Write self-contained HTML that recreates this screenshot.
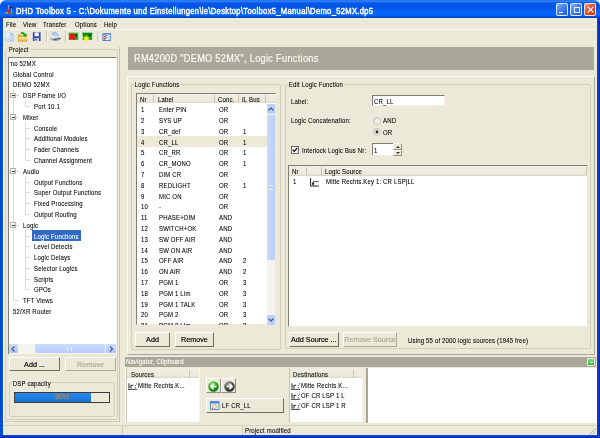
<!DOCTYPE html><html><head><meta charset="utf-8"><style>
*{margin:0;padding:0;box-sizing:border-box}
html,body{width:600px;height:438px;overflow:hidden;background:#ECE9D8}
html{background:#0846C8}
body{filter:blur(0.35px)}
body{position:relative;font-family:"Liberation Sans",sans-serif;font-size:7.2px;color:#000}
.a{position:absolute}
.t{position:absolute;white-space:nowrap;line-height:11.2px;letter-spacing:0.2px;-webkit-text-stroke:0.08px currentColor;transform:scaleX(0.836);transform-origin:0 0}
.w{background:#fff}
.grp{position:absolute;border:1px solid #D0D0BF;border-radius:2px}
.gl{position:absolute;background:#ECE9D8;padding:0 1px;line-height:8px;white-space:nowrap;letter-spacing:0.2px;-webkit-text-stroke:0.08px currentColor;transform:translateY(1.0px) scaleX(0.836);transform-origin:0 0}
.btn{position:absolute;border:1px solid #003C74;border-radius:2px;background:linear-gradient(#FFFFFF,#F3F3EF 60%,#E2E1D8);text-align:center;white-space:nowrap;-webkit-text-stroke:0.18px currentColor}
.hdr{position:absolute;background:linear-gradient(#EFEEE3,#EBEADB 80%,#D8D5C4)}
.sep{position:absolute;width:1px;background:#C7C5B2}
.tl{position:absolute;background:#DDDBD1}
</style></head><body>
<div class="a" style="left:0;top:0;width:600px;height:8px;background:#F4F4F4"></div>
<div class="a" style="left:0;top:0;width:600px;height:18px;background:linear-gradient(#1F5FD8 0%,#3A8EFF 6%,#0C60F2 14%,#0452E2 28%,#0456EA 45%,#0866FC 68%,#0462F8 86%,#0048D4 94%,#003CC0 100%);border-radius:6px 6px 0 0"></div>
<div class="a" style="left:0;top:17px;width:3px;height:421px;background:linear-gradient(90deg,#0040C8,#0058E8 60%,#0045C8)"></div>
<div class="a" style="left:596.5px;top:17px;width:3.5px;height:421px;background:linear-gradient(90deg,#0846D8,#0A3CC8 50%,#0020A0)"></div>
<svg class="a" style="left:3px;top:4px" width="12" height="11"><path d="M5.6 1V5" stroke="#A8C8F0" stroke-width="0.8"/><rect x="4.8" y="5" width="1.9" height="5" fill="#F01818"/><path d="M1 9.5L3.5 8.5H10.5V10H1Z" fill="#8A6A3A"/><rect x="7.2" y="3" width="2.8" height="1.3" fill="#3A2A1A"/><path d="M8.5 4.3V9" stroke="#90B8E8" stroke-width="0.8"/><path d="M1.5 9L3.5 8.3H4.8V9.5" fill="#C8C0A0"/></svg>
<div class="t" style="left:16px;top:5.5px;font-weight:normal;font-size:8.5px;letter-spacing:0.35px;color:#fff;line-height:10px;transform:scaleX(0.895);-webkit-text-stroke:0.45px #fff">DHD Toolbox 5 - C:\Dokumente und Einstellungen\le\Desktop\Toolbox5_Manual\Demo_52MX.dp5</div>
<div class="a" style="left:556.3px;top:3.4px;width:11.6px;height:12.4px;border:0.9px solid rgba(255,255,255,0.8);border-radius:2px;background:linear-gradient(135deg,#8AB4FC,#4A88F4 40%,#2E6AE8 75%,#2458D8)"><div class="a" style="left:2.2px;top:7.6px;width:3.6px;height:1.3px;background:#fff"></div></div>
<div class="a" style="left:570px;top:3.4px;width:12px;height:12.4px;border:0.9px solid rgba(255,255,255,0.8);border-radius:2px;background:linear-gradient(135deg,#8AB4FC,#4A88F4 40%,#2E6AE8 75%,#2458D8)"><div class="a" style="left:2.5px;top:2.2px;width:6px;height:6px;border:0.9px solid #E8F0FF;border-top-width:1.6px"></div></div>
<div class="a" style="left:583.8px;top:3.4px;width:12px;height:12.4px;border:0.9px solid rgba(255,255,255,0.8);border-radius:2px;background:linear-gradient(135deg,#F4A888,#E0603A 35%,#D44A20 70%,#C03A18)"><svg class="a" style="left:0;top:0" width="11" height="11"><path d="M2.8 2.8L8.4 8.4M8.4 2.8L2.8 8.4" stroke="#fff" stroke-width="1.2"/></svg></div>
<div class="t" style="left:6px;top:19.8px;line-height:10px">File</div>
<div class="t" style="left:22.5px;top:19.8px;line-height:10px">View</div>
<div class="t" style="left:43px;top:19.8px;line-height:10px">Transfer</div>
<div class="t" style="left:75px;top:19.8px;line-height:10px">Options</div>
<div class="t" style="left:103.8px;top:19.8px;line-height:10px">Help</div>
<div class="a" style="left:3px;top:29px;width:593px;height:1px;background:#F8F7F0"></div>
<svg class="a" style="left:0;top:28px" width="120" height="16" viewBox="0 28 120 16">
<defs>
<linearGradient id="gdoc" x1="0" y1="0" x2="1" y2="1"><stop offset="0" stop-color="#FFFFFF"/><stop offset="1" stop-color="#A9C6EE"/></linearGradient>
<linearGradient id="gfold" x1="0" y1="0" x2="0" y2="1"><stop offset="0" stop-color="#FFF0A8"/><stop offset="1" stop-color="#E0A830"/></linearGradient>
<linearGradient id="gprn" x1="0" y1="0" x2="0" y2="1"><stop offset="0" stop-color="#F0F0F4"/><stop offset="1" stop-color="#8890A0"/></linearGradient>
</defs>
<path d="M5.5 32.2H10.6L13.6 35.2V41.4H5.5Z" fill="url(#gdoc)" stroke="#B5C9E8" stroke-width="0.6"/>
<path d="M10.6 32.2V35.2H13.6Z" fill="#8FB0E0"/>
<path d="M18.2 34.8H21.2L22.2 35.8H26.8V41.3H18.2Z" fill="#E8B838" stroke="#C89028" stroke-width="0.5"/>
<path d="M19 37H28.2L27 41.3H18.2Z" fill="url(#gfold)"/>
<path d="M21 33.2Q23.2 32.2 24.8 34.6" stroke="#1EAA1E" stroke-width="1.9" fill="none"/>
<path d="M22.6 34.2L27.4 34L25.3 37.6Z" fill="#1EAA1E"/>
<path d="M32.8 32.3H40.6V41H32.8Z" fill="#3A4AB8"/>
<path d="M34.6 32.5H38.8V36.2H34.6Z" fill="#F4F4FC"/>
<path d="M34.4 38H39V41H34.4Z" fill="#C8CCEC"/>
<path d="M35.2 38.6H36.6V40.6H35.2Z" fill="#3A4AB8"/>
<rect x="46" y="31" width="1" height="11" fill="#C9C6B6"/><rect x="47" y="31" width="0.8" height="11" fill="#F8F7F0"/>
<path d="M52 33.5L55.5 31.8L58.8 35.6L55.2 37.4Z" fill="#A8D0F8" stroke="#6A9AD8" stroke-width="0.5"/>
<path d="M50 37.6L54.5 35.8L60.8 36.6V39.4L56 41.2L50.4 40Z" fill="url(#gprn)"/>
<path d="M53.5 39.6L60.5 38.4" stroke="#404858" stroke-width="1"/>
<path d="M51.5 37.6L56.5 36.5" stroke="#F8F8FC" stroke-width="0.6"/>
<rect x="65" y="31" width="1" height="11" fill="#C9C6B6"/><rect x="66" y="31" width="0.8" height="11" fill="#F8F7F0"/>
<rect x="68.8" y="32.5" width="9.5" height="7.3" fill="#189A28"/>
<rect x="68.8" y="32.5" width="9.5" height="1.8" fill="#30C030"/>
<path d="M68.8 32.5H78.3V39.8" stroke="#E8F8E0" stroke-width="0.5" fill="none"/>
<circle cx="75.8" cy="35.2" r="1" fill="#101020"/>
<path d="M69 34.2L71.5 33.6L73.2 33.8L75 34.8L74.6 37.2L75.4 39.8H72.8L71.8 38.6L70.4 39.8L69 39.2L69.6 37Z" fill="#FF1010"/>
<rect x="82.7" y="32.5" width="9.6" height="7.3" fill="#189A28"/>
<rect x="82.7" y="32.5" width="9.6" height="2.5" fill="#0C8A18"/>
<path d="M82.7 32.5H92.3V39.8" stroke="#E8F8E0" stroke-width="0.5" fill="none"/>
<circle cx="90" cy="35.2" r="1" fill="#101020"/>
<path d="M83 37.2L85.4 37L86.6 35.6L87.8 37.2L89.3 37.6L88.4 39.2L88.8 41.2L86.6 40.6L84.2 41.2L84.6 39.4Z" fill="#F8F010"/>
<rect x="97.2" y="31" width="1" height="11" fill="#C9C6B6"/><rect x="98.2" y="31" width="0.8" height="11" fill="#F8F7F0"/>
<rect x="102.5" y="33.3" width="8.5" height="7.6" rx="0.8" fill="#2A6AD8"/>
<rect x="103.3" y="34.6" width="6.9" height="5.5" fill="#F4F8FF"/>
<rect x="106.5" y="34.6" width="3.7" height="5.5" fill="#C8E4FA"/>
<path d="M103.6 35.8L104.6 36.8L106.6 34.8M103.6 38.2L104.6 39.2L106.6 37.2" stroke="#B04A30" stroke-width="1.1" fill="none"/>
</svg>
<div class="a" style="left:3px;top:47px;width:117px;height:375px;border-left:1px solid #fff;border-right:1px solid #C8C5B5;border-bottom:1px solid #D0CDBD"></div>
<div class="grp" style="left:4.8px;top:49px;width:113.5px;height:371px"></div>
<div class="gl" style="left:8px;top:44.9px">Project</div>
<div class="a w" style="left:7.5px;top:56.5px;width:109px;height:297px;border:1px solid #7F7F73;border-right-color:#F4F3EC;border-bottom-color:#F4F3EC;border-top-color:#858378;border-top-width:1.5px"></div>
<div class="tl" style="left:12.5px;top:90.27px;width:1px;height:210.01px"></div>
<div class="tl" style="left:24.5px;top:100.27px;width:1px;height:5.79px"></div>
<div class="tl" style="left:24.5px;top:121.85px;width:1px;height:38.16px"></div>
<div class="tl" style="left:24.5px;top:175.80px;width:1px;height:38.16px"></div>
<div class="tl" style="left:24.5px;top:229.75px;width:1px;height:59.74px"></div>
<div class="a" style="left:8.5px;top:57.90px;width:100px;height:11px;overflow:hidden"><div class="t" style="left:0.50px;top:0">mo 52MX</div></div>
<div class="t" style="left:12.5px;top:68.69px">Global Control</div>
<div class="t" style="left:12.5px;top:79.48px">DEMO 52MX</div>
<div class="tl" style="left:15px;top:95.27px;width:4px;height:1px"></div>
<div class="a" style="left:10.1px;top:92.57px;width:5.6px;height:5.6px;border:0.7px solid #B4B4A6;background:linear-gradient(135deg,#fff,#E4E2D8)"><div class="a" style="left:1.1px;top:1.8px;width:2.6px;height:0.8px;background:#444"></div></div>
<div class="t" style="left:23.2px;top:90.27px">DSP Frame I/O</div>
<div class="tl" style="left:25px;top:106.06px;width:5px;height:1px"></div>
<div class="t" style="left:34px;top:101.06px">Port 10.1</div>
<div class="tl" style="left:15px;top:116.85px;width:4px;height:1px"></div>
<div class="a" style="left:10.1px;top:114.15px;width:5.6px;height:5.6px;border:0.7px solid #B4B4A6;background:linear-gradient(135deg,#fff,#E4E2D8)"><div class="a" style="left:1.1px;top:1.8px;width:2.6px;height:0.8px;background:#444"></div></div>
<div class="t" style="left:23.2px;top:111.85px">Mixer</div>
<div class="tl" style="left:25px;top:127.64px;width:5px;height:1px"></div>
<div class="t" style="left:34px;top:122.64px">Console</div>
<div class="tl" style="left:25px;top:138.43px;width:5px;height:1px"></div>
<div class="t" style="left:34px;top:133.43px">Additional Modules</div>
<div class="tl" style="left:25px;top:149.22px;width:5px;height:1px"></div>
<div class="t" style="left:34px;top:144.22px">Fader Channels</div>
<div class="tl" style="left:25px;top:160.01px;width:5px;height:1px"></div>
<div class="t" style="left:34px;top:155.01px">Channel Assignment</div>
<div class="tl" style="left:15px;top:170.80px;width:4px;height:1px"></div>
<div class="a" style="left:10.1px;top:168.10px;width:5.6px;height:5.6px;border:0.7px solid #B4B4A6;background:linear-gradient(135deg,#fff,#E4E2D8)"><div class="a" style="left:1.1px;top:1.8px;width:2.6px;height:0.8px;background:#444"></div></div>
<div class="t" style="left:23.2px;top:165.80px">Audio</div>
<div class="tl" style="left:25px;top:181.59px;width:5px;height:1px"></div>
<div class="t" style="left:34px;top:176.59px">Output Functions</div>
<div class="tl" style="left:25px;top:192.38px;width:5px;height:1px"></div>
<div class="t" style="left:34px;top:187.38px">Super Output Functions</div>
<div class="tl" style="left:25px;top:203.17px;width:5px;height:1px"></div>
<div class="t" style="left:34px;top:198.17px">Fixed Processing</div>
<div class="tl" style="left:25px;top:213.96px;width:5px;height:1px"></div>
<div class="t" style="left:34px;top:208.96px">Output Routing</div>
<div class="tl" style="left:15px;top:224.75px;width:4px;height:1px"></div>
<div class="a" style="left:10.1px;top:222.05px;width:5.6px;height:5.6px;border:0.7px solid #B4B4A6;background:linear-gradient(135deg,#fff,#E4E2D8)"><div class="a" style="left:1.1px;top:1.8px;width:2.6px;height:0.8px;background:#444"></div></div>
<div class="t" style="left:23.2px;top:219.75px">Logic</div>
<div class="tl" style="left:25px;top:235.54px;width:5px;height:1px"></div>
<div class="a" style="left:32px;top:230.24px;width:48.5px;height:10.7px;background:#316AC5"></div>
<div class="t" style="left:34px;top:230.54px;color:#fff">Logic Functions</div>
<div class="tl" style="left:25px;top:246.33px;width:5px;height:1px"></div>
<div class="t" style="left:34px;top:241.33px">Level Detects</div>
<div class="tl" style="left:25px;top:257.12px;width:5px;height:1px"></div>
<div class="t" style="left:34px;top:252.12px">Logic Delays</div>
<div class="tl" style="left:25px;top:267.91px;width:5px;height:1px"></div>
<div class="t" style="left:34px;top:262.91px">Selector Logics</div>
<div class="tl" style="left:25px;top:278.70px;width:5px;height:1px"></div>
<div class="t" style="left:34px;top:273.70px">Scripts</div>
<div class="tl" style="left:25px;top:289.49px;width:5px;height:1px"></div>
<div class="t" style="left:34px;top:284.49px">GPOs</div>
<div class="tl" style="left:13px;top:300.28px;width:6px;height:1px"></div>
<div class="t" style="left:23.2px;top:295.28px">TFT Views</div>
<div class="t" style="left:12.5px;top:306.07px">52/XR Router</div>
<div class="a" style="left:7.5px;top:56.5px;width:1px;height:297px;background:#7F7F73"></div><div class="a" style="left:8.5px;top:58px;width:0.8px;height:295px;background:#fff"></div>
<div class="a" style="left:8.5px;top:343.6px;width:108px;height:9.2px;background:#F4F3EE"></div>
<div class="a" style="left:9px;top:344px;width:9px;height:8.5px;background:linear-gradient(#C8DAFC,#B0C8F8);border-radius:1px"><svg class="a" style="left:2px;top:1.5px" width="5" height="6"><path d="M3.5 0.5L1 3L3.5 5.5" stroke="#4D6185" stroke-width="1.3" fill="none"/></svg></div>
<div class="a" style="left:34.5px;top:344px;width:70px;height:8.5px;background:linear-gradient(#CADCFC,#B8CEFA);border-radius:1px"><div class="a" style="left:32px;top:2.5px;width:5px;height:4px;border-left:1px solid #EEF4FE;border-right:1px solid #EEF4FE"></div></div>
<div class="a" style="left:105.5px;top:344px;width:10.5px;height:8.5px;background:linear-gradient(#C8DAFC,#B0C8F8);border-radius:1px"><svg class="a" style="left:3px;top:1.5px" width="5" height="6"><path d="M1 0.5L3.5 3L1 5.5" stroke="#4D6185" stroke-width="1.3" fill="none"/></svg></div>
<div class="btn" style="left:8.6px;top:356.6px;width:51.8px;height:14.8px;line-height:13px;border-color:#ACA899;background:#ECE9D8;border-right-color:#716F64;border-bottom-color:#716F64;border-top-color:#fff;border-left-color:#fff;border-radius:0">Add ...</div>
<div class="btn" style="left:64.6px;top:356.6px;width:51.8px;height:14.8px;line-height:13px;color:#ACA899;background:#ECE9D8;border-right-color:#ACA899;border-bottom-color:#ACA899;border-top-color:#fff;border-left-color:#fff;border-radius:0">Remove</div>
<div class="grp" style="left:8.6px;top:382.3px;width:106px;height:34.5px"></div>
<div class="gl" style="left:12px;top:379px">DSP capacity</div>
<div class="a" style="left:14.4px;top:392px;width:95.4px;height:10.6px;border:1px solid #3A3A3A;background:#ECE9D8"><div class="a" style="left:0;top:0;width:75.8px;height:8.6px;background:linear-gradient(#2A86E6,#1E7EE0 50%,#1A74D4)"></div><div class="t" style="left:0;top:-0.8px;width:93.4px;text-align:center;color:#C8864A;line-height:10px;transform:none;letter-spacing:-0.2px">80%</div></div>
<div class="a" style="left:128px;top:47px;width:466px;height:23px;background:#ACA899"></div>
<div class="t" style="left:133.5px;top:52.9px;font-size:10.2px;letter-spacing:0.35px;color:#FAFAF6;line-height:11px;transform:scaleX(0.898);-webkit-text-stroke:0.15px #fff">RM4200D "DEMO 52MX", Logic Functions</div>
<div class="a" style="left:126.5px;top:76px;width:468px;height:278.5px;border-top:1px solid #FAF9F4;border-left:1px solid #FAF9F4;border-bottom:1px solid #ACA899;border-right:1px solid #ACA899"></div>
<div class="grp" style="left:131px;top:83.7px;width:149.5px;height:266px"></div>
<div class="gl" style="left:134.2px;top:80px">Logic Functions</div>
<div class="a w" style="left:135.7px;top:92.8px;width:140.5px;height:232px;border:1px solid #7F7F73;border-right-color:#ECEADF;border-bottom-color:#ECEADF"></div>
<div class="hdr" style="left:136.7px;top:93.8px;width:139px;height:9.5px"></div>
<div class="sep" style="left:153px;top:95px;height:7px"></div>
<div class="sep" style="left:213.8px;top:95px;height:7px"></div>
<div class="sep" style="left:238px;top:95px;height:7px"></div>
<div class="sep" style="left:265.3px;top:95px;height:7px"></div>
<div class="t" style="left:139.7px;top:94.3px">Nr</div>
<div class="t" style="left:157.5px;top:94.3px">Label</div>
<div class="t" style="left:217.8px;top:94.3px">Conc.</div>
<div class="t" style="left:241.8px;top:94.3px">IL Bus</div>
<div class="a" style="left:0;top:0;width:600px;height:324.8px;overflow:hidden"><div class="a" style="left:0;top:0;width:600px;height:438px;clip-path:inset(103.3px 0 0 0)"><div class="t" style="left:141.3px;top:104.30px">1</div><div class="t" style="left:159px;top:104.30px">Enter PIN</div><div class="t" style="left:218.8px;top:104.30px">OR</div><div class="t" style="left:242.8px;top:104.30px"></div><div class="t" style="left:141.3px;top:115.09px">2</div><div class="t" style="left:159px;top:115.09px">SYS UP</div><div class="t" style="left:218.8px;top:115.09px">OR</div><div class="t" style="left:242.8px;top:115.09px"></div><div class="t" style="left:141.3px;top:125.88px">3</div><div class="t" style="left:159px;top:125.88px">CR_def</div><div class="t" style="left:218.8px;top:125.88px">OR</div><div class="t" style="left:242.8px;top:125.88px">1</div><div class="a" style="left:137px;top:136.27px;width:130px;height:10.4px;background:#ECE9D8"></div><div class="t" style="left:141.3px;top:136.67px">4</div><div class="t" style="left:159px;top:136.67px">CR_LL</div><div class="t" style="left:218.8px;top:136.67px">OR</div><div class="t" style="left:242.8px;top:136.67px">1</div><div class="t" style="left:141.3px;top:147.46px">5</div><div class="t" style="left:159px;top:147.46px">CR_RR</div><div class="t" style="left:218.8px;top:147.46px">OR</div><div class="t" style="left:242.8px;top:147.46px">1</div><div class="t" style="left:141.3px;top:158.25px">6</div><div class="t" style="left:159px;top:158.25px">CR_MONO</div><div class="t" style="left:218.8px;top:158.25px">OR</div><div class="t" style="left:242.8px;top:158.25px">1</div><div class="t" style="left:141.3px;top:169.04px">7</div><div class="t" style="left:159px;top:169.04px">DIM CR</div><div class="t" style="left:218.8px;top:169.04px">OR</div><div class="t" style="left:242.8px;top:169.04px"></div><div class="t" style="left:141.3px;top:179.83px">8</div><div class="t" style="left:159px;top:179.83px">REDLIGHT</div><div class="t" style="left:218.8px;top:179.83px">OR</div><div class="t" style="left:242.8px;top:179.83px">1</div><div class="t" style="left:141.3px;top:190.62px">9</div><div class="t" style="left:159px;top:190.62px">MIC ON</div><div class="t" style="left:218.8px;top:190.62px">OR</div><div class="t" style="left:242.8px;top:190.62px"></div><div class="t" style="left:141.3px;top:201.41px">10</div><div class="t" style="left:159px;top:201.41px">-</div><div class="t" style="left:218.8px;top:201.41px">OR</div><div class="t" style="left:242.8px;top:201.41px"></div><div class="t" style="left:141.3px;top:212.20px">11</div><div class="t" style="left:159px;top:212.20px">PHASE+DIM</div><div class="t" style="left:218.8px;top:212.20px">AND</div><div class="t" style="left:242.8px;top:212.20px"></div><div class="t" style="left:141.3px;top:222.99px">12</div><div class="t" style="left:159px;top:222.99px">SWITCH+OK</div><div class="t" style="left:218.8px;top:222.99px">AND</div><div class="t" style="left:242.8px;top:222.99px"></div><div class="t" style="left:141.3px;top:233.78px">13</div><div class="t" style="left:159px;top:233.78px">SW OFF AIR</div><div class="t" style="left:218.8px;top:233.78px">AND</div><div class="t" style="left:242.8px;top:233.78px"></div><div class="t" style="left:141.3px;top:244.57px">14</div><div class="t" style="left:159px;top:244.57px">SW ON AIR</div><div class="t" style="left:218.8px;top:244.57px">AND</div><div class="t" style="left:242.8px;top:244.57px"></div><div class="t" style="left:141.3px;top:255.36px">15</div><div class="t" style="left:159px;top:255.36px">OFF AIR</div><div class="t" style="left:218.8px;top:255.36px">AND</div><div class="t" style="left:242.8px;top:255.36px">2</div><div class="t" style="left:141.3px;top:266.15px">16</div><div class="t" style="left:159px;top:266.15px">ON AIR</div><div class="t" style="left:218.8px;top:266.15px">AND</div><div class="t" style="left:242.8px;top:266.15px">2</div><div class="t" style="left:141.3px;top:276.94px">17</div><div class="t" style="left:159px;top:276.94px">PGM 1</div><div class="t" style="left:218.8px;top:276.94px">OR</div><div class="t" style="left:242.8px;top:276.94px">3</div><div class="t" style="left:141.3px;top:287.73px">18</div><div class="t" style="left:159px;top:287.73px">PGM 1 Lim</div><div class="t" style="left:218.8px;top:287.73px">OR</div><div class="t" style="left:242.8px;top:287.73px">3</div><div class="t" style="left:141.3px;top:298.52px">19</div><div class="t" style="left:159px;top:298.52px">PGM 1 TALK</div><div class="t" style="left:218.8px;top:298.52px">OR</div><div class="t" style="left:242.8px;top:298.52px">3</div><div class="t" style="left:141.3px;top:309.31px">20</div><div class="t" style="left:159px;top:309.31px">PGM 2</div><div class="t" style="left:218.8px;top:309.31px">OR</div><div class="t" style="left:242.8px;top:309.31px">3</div><div class="t" style="left:141.3px;top:320.10px">21</div><div class="t" style="left:159px;top:320.10px">PGM 2 Lim</div><div class="t" style="left:218.8px;top:320.10px">OR</div><div class="t" style="left:242.8px;top:320.10px">3</div></div></div>
<div class="a" style="left:266.8px;top:103.5px;width:8.5px;height:221.5px;background:#F4F3EE"></div>
<div class="a" style="left:266.8px;top:103.5px;width:8.5px;height:10px;background:linear-gradient(90deg,#C4D8FC,#B4CCF8);border-radius:1px"><svg class="a" style="left:1.5px;top:3px" width="6" height="4"><path d="M0.5 3.5L3 1L5.5 3.5" stroke="#4D6185" stroke-width="1.3" fill="none"/></svg></div>
<div class="a" style="left:266.8px;top:114.5px;width:8.5px;height:145.5px;background:linear-gradient(90deg,#C8DAFC,#B8CEFA);border-radius:1px"><div class="a" style="left:2.5px;top:70px;width:4px;height:5px;border-top:1px solid #EEF4FE;border-bottom:1px solid #EEF4FE"></div></div>
<div class="a" style="left:266.8px;top:315px;width:8.5px;height:10px;background:linear-gradient(90deg,#C4D8FC,#B4CCF8);border-radius:1px"><svg class="a" style="left:1.5px;top:3px" width="6" height="4"><path d="M0.5 0.5L3 3L5.5 0.5" stroke="#4D6185" stroke-width="1.3" fill="none"/></svg></div>
<div class="btn" style="left:135px;top:332.4px;width:35px;height:14.5px;line-height:13px;background:#ECE9D8;border-color:#fff #716F64 #716F64 #fff;border-radius:0">Add</div>
<div class="btn" style="left:175px;top:332.4px;width:38.8px;height:14.5px;line-height:13px;background:#ECE9D8;border-color:#fff #716F64 #716F64 #fff;border-radius:0">Remove</div>
<div class="grp" style="left:285.3px;top:83.7px;width:306px;height:265.5px"></div>
<div class="gl" style="left:288.3px;top:80px">Edit Logic Function</div>
<div class="t" style="left:291px;top:96px">Label:</div>
<div class="a w" style="left:372.3px;top:95.3px;width:72.5px;height:10.8px;border:1px solid #7F7F73;border-right-color:#F0EFE8;border-bottom-color:#F0EFE8"></div>
<div class="t" style="left:374px;top:96px">CR_LL</div>
<div class="t" style="left:291px;top:115.1px">Logic Concatenation:</div>
<svg class="a" style="left:373px;top:116.6px" width="8" height="8"><defs><linearGradient id="rg" x1="0" y1="0" x2="1" y2="1"><stop offset="0" stop-color="#DCDCD4"/><stop offset="1" stop-color="#FFFFFF"/></linearGradient></defs><circle cx="4" cy="4" r="3.4" fill="url(#rg)" stroke="#A8A898" stroke-width="0.6"/></svg>
<div class="t" style="left:383px;top:115.4px">AND</div>
<svg class="a" style="left:373px;top:128px" width="8" height="8"><circle cx="4" cy="4" r="3.4" fill="url(#rg)" stroke="#A8A898" stroke-width="0.6"/><circle cx="4" cy="4" r="1.4" fill="#222"/></svg>
<div class="t" style="left:383px;top:127px">OR</div>
<svg class="a" style="left:291.2px;top:145.8px" width="8" height="8"><rect x="0.5" y="0.5" width="7" height="7" fill="#F4F4F0" stroke="#4A4A48" stroke-width="0.8"/><path d="M1.8 3.8L3.3 5.4L6.2 2" stroke="#111" stroke-width="1.3" fill="none"/></svg>
<div class="t" style="left:301.7px;top:144.5px">Interlock Logic Bus Nr:</div>
<div class="a w" style="left:372.3px;top:143.3px;width:20.5px;height:12.6px;border:1px solid #7F7F73;border-right:none;border-bottom-color:#F0EFE8"></div>
<div class="t" style="left:374px;top:144.5px">1</div>
<div class="a" style="left:392.5px;top:143.3px;width:9px;height:6.3px;border:1px solid #fff;border-right-color:#8F8E84;border-bottom-color:#8F8E84;background:#ECE9D8"><svg class="a" style="left:2px;top:1px" width="4" height="3"><path d="M0 3L2 1L4 3Z" fill="#333"/></svg></div>
<div class="a" style="left:392.5px;top:149.6px;width:9px;height:6.3px;border:1px solid #fff;border-right-color:#8F8E84;border-bottom-color:#8F8E84;background:#ECE9D8"><svg class="a" style="left:2px;top:1px" width="4" height="3"><path d="M0 0L4 0L2 2Z" fill="#333"/></svg></div>
<div class="a w" style="left:288px;top:165px;width:300px;height:161.5px;border:1px solid #7F7F73;border-right-color:#ECEADF;border-bottom-color:#ECEADF"></div>
<div class="hdr" style="left:289px;top:166px;width:298px;height:9.8px"></div>
<div class="sep" style="left:306px;top:167px;height:7.5px"></div>
<div class="sep" style="left:321.3px;top:167px;height:7.5px"></div>
<div class="sep" style="left:586.2px;top:167px;height:7.5px"></div>
<div class="t" style="left:292px;top:166px">Nr</div>
<div class="t" style="left:325.3px;top:166px">Logic Source</div>
<div class="t" style="left:292.5px;top:176.1px">1</div>
<svg class="a" style="left:310px;top:177.5px" width="9" height="9"><path d="M0.6 0V8H8.8" stroke="#222" stroke-width="1" fill="none"/><path d="M3 7.6V3.6H8.8" stroke="#333" stroke-width="0.8" fill="none"/><circle cx="3.2" cy="5.8" r="1.1" fill="#111"/></svg>
<div class="t" style="left:326px;top:176.1px">Mitte Rechts.Key 1: CR LSP|LL</div>
<div class="btn" style="left:288.5px;top:332px;width:50.7px;height:14.8px;line-height:13px;background:#ECE9D8;border-color:#fff #716F64 #716F64 #fff;border-radius:0">Add Source ...</div>
<div class="btn" style="left:342.7px;top:332px;width:54.6px;height:14.8px;line-height:13px;color:#ACA899;background:#ECE9D8;border-color:#fff #ACA899 #ACA899 #fff;border-radius:0">Remove Source</div>
<div class="t" style="left:407.5px;top:335px">Using 55 of 2000 logic sources (1945 free)</div>
<div class="a" style="left:124.5px;top:357px;width:471.5px;height:9.5px;background:#ACA899"></div>
<div class="t" style="left:125.5px;top:356.3px;color:#FAFAF6;-webkit-text-stroke:0.12px #fff">Navigator, Clipboard</div>
<div class="a" style="left:587px;top:358px;width:8px;height:7.5px;background:linear-gradient(#7CE07C,#30B030);border:1px solid #F0F0F0;border-radius:1px"><div class="a" style="left:1.5px;top:2.5px;width:3px;height:1px;background:#fff"></div></div>
<div class="a" style="left:124.5px;top:366.5px;width:471.5px;height:57.5px;border-left:1px solid #fff"></div>
<div class="a w" style="left:126.4px;top:368.4px;width:73.6px;height:53.5px;border-left:1px solid #C4C2B4;border-right:1px solid #F4F3EC"></div>
<div class="hdr" style="left:127.4px;top:368.4px;width:72px;height:9.9px"></div>
<div class="sep" style="left:189.4px;top:369.5px;height:8px"></div>
<div class="t" style="left:130.6px;top:369px">Sources</div>
<svg class="a" style="left:127.8px;top:382.50px" width="10" height="7"><path d="M1 0.3V5.6M3 2V5.6M3 2.8Q4 1.8 5.2 2.2M6.8 2.6H7.8M6.8 4.8H7.8" stroke="#222" stroke-width="1" fill="none"/><path d="M0 6.4H9.2" stroke="#333" stroke-width="0.9"/><circle cx="8.6" cy="0.9" r="0.7" fill="#D04040"/></svg>
<div class="t" style="left:138.4px;top:380.3px">Mitte Rechts.K...</div>
<div class="a" style="left:205.8px;top:377.5px;width:15px;height:15px;border:1px solid #fff;border-right-color:#8F8E84;border-bottom-color:#8F8E84"><svg class="a" style="left:1.5px;top:2px" width="11" height="11"><defs><radialGradient id="gg" cx="0.4" cy="0.3" r="0.7"><stop offset="0" stop-color="#A8F088"/><stop offset="0.6" stop-color="#20A818"/><stop offset="1" stop-color="#107010"/></radialGradient></defs><circle cx="5.5" cy="5.5" r="5.2" fill="url(#gg)"/><path d="M8.5 5.5H3M5.5 2.8L2.8 5.5L5.5 8.2" stroke="#fff" stroke-width="1.5" fill="none"/></svg></div>
<div class="a" style="left:221px;top:377.5px;width:15px;height:15px;border:1px solid #fff;border-right-color:#8F8E84;border-bottom-color:#8F8E84"><svg class="a" style="left:1.7px;top:2px" width="11" height="11"><defs><radialGradient id="gk" cx="0.4" cy="0.3" r="0.7"><stop offset="0" stop-color="#B0B0B0"/><stop offset="0.6" stop-color="#4A4A4A"/><stop offset="1" stop-color="#282828"/></radialGradient></defs><circle cx="5.5" cy="5.5" r="5.2" fill="url(#gk)"/><path d="M2.5 5.5H8M5.5 2.8L8.2 5.5L5.5 8.2" stroke="#fff" stroke-width="1.5" fill="none"/></svg></div>
<div class="btn" style="left:205.8px;top:397.5px;width:78px;height:15px;background:#ECE9D8;border-color:#fff #716F64 #716F64 #fff;border-radius:0;text-align:left"><svg class="a" style="left:3.5px;top:2px" width="10" height="10"><rect x="0.5" y="0.5" width="8.5" height="8" fill="#E4F0FC" stroke="#3A78C8" stroke-width="0.8"/><rect x="0.5" y="0.5" width="8.5" height="2" fill="#4A88D8"/><circle cx="4.5" cy="5.5" r="2" fill="none" stroke="#E0A040" stroke-width="0.8"/><path d="M3 7L0.8 9.3" stroke="#C08030" stroke-width="1"/></svg><div class="t" style="left:15.5px;top:1.2px">LF CR_LL</div></div>
<div class="a w" style="left:288.6px;top:368.4px;width:74px;height:53.5px;border-left:1px solid #C4C2B4;border-right:1px solid #F4F3EC"></div>
<div class="hdr" style="left:289.6px;top:368.4px;width:72.4px;height:9.9px"></div>
<div class="sep" style="left:352.5px;top:369.5px;height:8px"></div>
<div class="t" style="left:292.9px;top:369px">Destinations</div>
<svg class="a" style="left:290.8px;top:382.50px" width="10" height="7"><path d="M1 0.3V5.6M3 2V5.6M3 2.8Q4 1.8 5.2 2.2M6.8 2.6H7.8M6.8 4.8H7.8" stroke="#222" stroke-width="1" fill="none"/><path d="M0 6.4H9.2" stroke="#333" stroke-width="0.9"/><circle cx="8.6" cy="0.9" r="0.7" fill="#D04040"/></svg>
<div class="t" style="left:301px;top:380.30px">Mitte Rechts.K...</div>
<svg class="a" style="left:290.8px;top:392.50px" width="10" height="7"><path d="M1 0.3V5.6M3 2V5.6M3 2.8Q4 1.8 5.2 2.2M6.8 2.6H7.8M6.8 4.8H7.8" stroke="#222" stroke-width="1" fill="none"/><path d="M0 6.4H9.2" stroke="#333" stroke-width="0.9"/><circle cx="8.6" cy="0.9" r="0.7" fill="#D04040"/></svg>
<div class="t" style="left:301px;top:390.30px">OF CR LSP 1 L</div>
<svg class="a" style="left:290.8px;top:402.50px" width="10" height="7"><path d="M1 0.3V5.6M3 2V5.6M3 2.8Q4 1.8 5.2 2.2M6.8 2.6H7.8M6.8 4.8H7.8" stroke="#222" stroke-width="1" fill="none"/><path d="M0 6.4H9.2" stroke="#333" stroke-width="0.9"/><circle cx="8.6" cy="0.9" r="0.7" fill="#D04040"/></svg>
<div class="t" style="left:301px;top:400.30px">OF CR LSP 1 R</div>
<div class="a w" style="left:365.5px;top:367.6px;width:231px;height:55.8px;border-left:2.6px solid #A9A697"></div>
<div class="a" style="left:3px;top:424.8px;width:593px;height:10px;background:#ECE9D8;border-top:1px solid #D6D3C3"></div>
<div class="a" style="left:122.3px;top:425.5px;width:1px;height:9px;background:#CFCCBC"></div>
<div class="a" style="left:242.4px;top:425.5px;width:1px;height:9px;background:#CFCCBC"></div>
<div class="t" style="left:245px;top:424.8px">Project modified</div>
<svg class="a" style="left:587px;top:425.5px" width="9" height="9"><path d="M8.5 2.5L2.5 8.5M8.5 5.5L5.5 8.5" stroke="#B8B5A8" stroke-width="1"/></svg>
<div class="a" style="left:0;top:434.6px;width:600px;height:3.4px;background:linear-gradient(#0A4ED8,#0638C0 60%,#0020A0)"></div>
</body></html>
